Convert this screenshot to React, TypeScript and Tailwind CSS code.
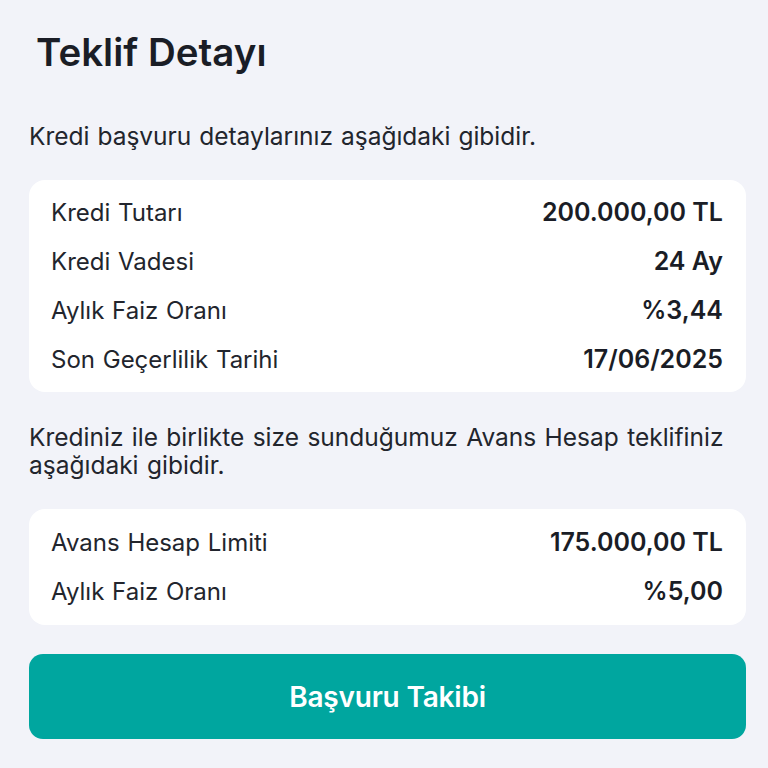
import React from "react";

const Row = ({ label, value }: { label: string; value: string }) => (
  <div className="flex items-center justify-between h-[49px]">
    <span className="text-[24px] text-[#22252d] [word-spacing:1px]">{label}</span>
    <span className="text-[25px] font-semibold text-[#1a1d26]">{value}</span>
  </div>
);

export default function App() {
  return (
    <div
      className="w-[768px] h-[768px] bg-[#f2f3f9] overflow-hidden"
      style={{ fontFamily: "Inter, 'Noto Sans', sans-serif" }}
    >
      <div className="pl-[29px] pr-[22px]">
        <h1 className="pt-[29px] pl-[7px] text-[38.5px] font-semibold text-[#1a1d26] leading-[46px]">
          Teklif Detayı
        </h1>
        <p className="mt-[46px] text-[24.5px] leading-[30px] text-[#22252d] [word-spacing:1px]">
          Kredi başvuru detaylarınız aşağıdaki gibidir.
        </p>
        <div className="mt-[29px] bg-white rounded-[16px] pl-[22px] pr-[23px] py-[8px]">
          <Row label="Kredi Tutarı" value="200.000,00 TL" />
          <Row label="Kredi Vadesi" value="24 Ay" />
          <Row label="Aylık Faiz Oranı" value="%3,44" />
          <Row label="Son Geçerlilik Tarihi" value="17/06/2025" />
        </div>
        <p className="mt-[31px] text-[24.5px] leading-[28px] text-[#22252d] [word-spacing:1.5px]">
          Krediniz ile birlikte size sunduğumuz Avans Hesap teklifiniz aşağıdaki gibidir.
        </p>
        <div className="mt-[30px] bg-white rounded-[16px] pl-[22px] pr-[23px] py-[9px]">
          <Row label="Avans Hesap Limiti" value="175.000,00 TL" />
          <Row label="Aylık Faiz Oranı" value="%5,00" />
        </div>
        <button className="mt-[29px] w-full h-[85px] rounded-[14px] bg-[#00a69f] text-white text-[28px] font-semibold tracking-[-0.2px]">
          Başvuru Takibi
        </button>
      </div>
    </div>
  );
}
